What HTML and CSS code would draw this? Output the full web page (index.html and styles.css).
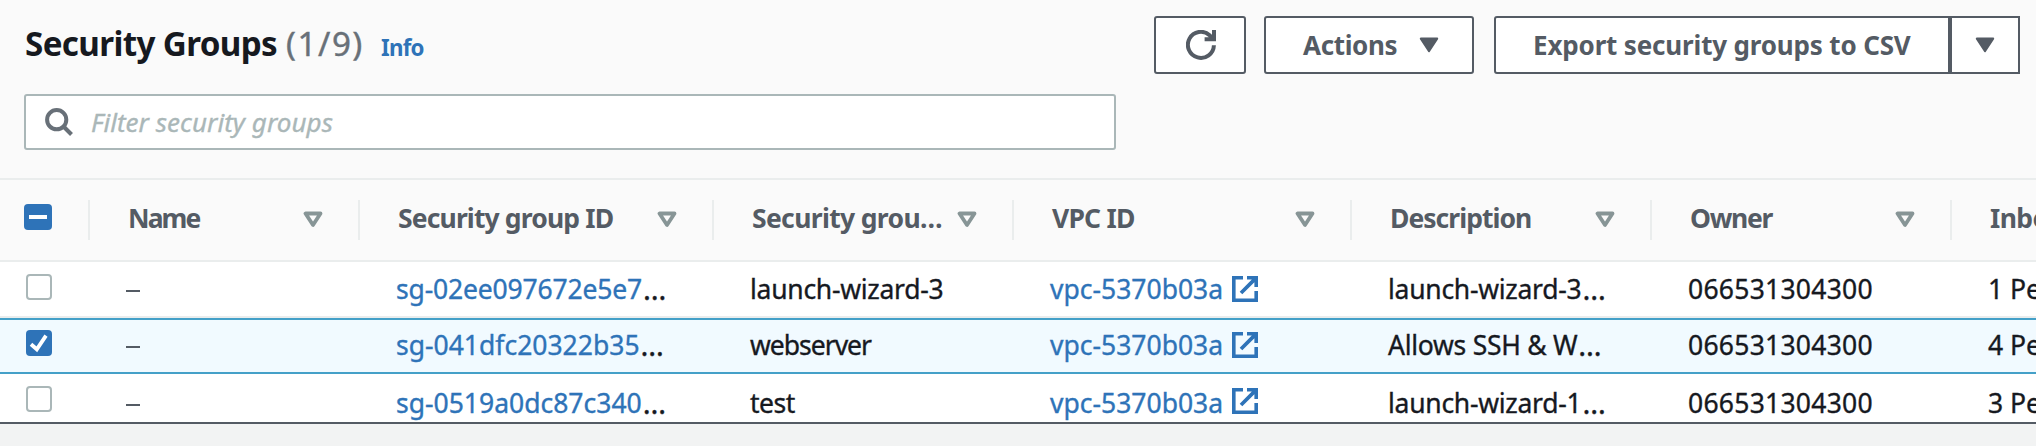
FILE: index.html
```html
<!DOCTYPE html>
<html lang="en">
<head>
<meta charset="utf-8">
<title>Security Groups</title>
<link rel="stylesheet" href="styles.css">
</head>
<body>
<svg width="0" height="0" class="defs" aria-hidden="true">
  <symbol id="sort" viewBox="0 0 20 17"><path d="M2.5 2.5h15L10 14z" fill="none" stroke="#879596" stroke-width="3.8" stroke-linejoin="round"/></symbol>
  <symbol id="caret" viewBox="0 0 20 16"><path d="M1.8 1.6h16.4L10 14.2z" fill="#545b64" stroke="#545b64" stroke-width="2" stroke-linejoin="round"/></symbol>
  <symbol id="ext" viewBox="0 0 26 26"><path d="M11 1.8H1.8v22.4h22.4V15" fill="none" stroke="#2e73b8" stroke-width="3.6"/><path d="M15 0h11v11h-3.6V6.2L10.3 18.3 7.7 15.7 19.8 3.6H15z" fill="#2e73b8"/></symbol>
</svg>
<section class="panel">
  <header class="toolbar">
    <div class="heading">
      <h1 class="title">Security Groups</h1>
      <span class="count">(1/9)</span>
      <a class="info">Info</a>
    </div>
    <div class="actions">
      <button class="btn btn-refresh" aria-label="Refresh">
        <svg class="refresh" viewBox="0 0 30 30"><path d="M27.9 15.2A13 13 0 1 1 23.6 5.2L27 9.2M28 0v9.2H18.6" fill="none" stroke="#545b64" stroke-width="4"/></svg>
      </button>
      <button class="btn btn-actions"><span>Actions</span><svg class="caret"><use href="#caret"/></svg></button>
      <div class="split">
        <button class="btn btn-export"><span>Export security groups to CSV</span></button>
        <button class="btn btn-more" aria-label="More"><svg class="caret"><use href="#caret"/></svg></button>
      </div>
    </div>
  </header>
  <div class="filter">
    <svg class="search" viewBox="0 0 28 28"><circle cx="11.7" cy="11.7" r="9.6" fill="none" stroke="#687078" stroke-width="4"/><path d="m18.5 18.5 8 8" stroke="#687078" stroke-width="4"/></svg>
    <span class="placeholder">Filter security groups</span>
  </div>
  <div class="table">
    <div class="row head">
      <div class="th pick"><span class="box mixed"></span></div>
      <div class="th"><span class="t-name">Name</span><svg class="sort"><use href="#sort"/></svg></div>
      <div class="th"><span class="t-id">Security group ID</span><svg class="sort"><use href="#sort"/></svg></div>
      <div class="th"><span class="t-group">Security grou…</span><svg class="sort"><use href="#sort"/></svg></div>
      <div class="th"><span class="t-vpc">VPC ID</span><svg class="sort"><use href="#sort"/></svg></div>
      <div class="th"><span class="t-desc">Description</span><svg class="sort"><use href="#sort"/></svg></div>
      <div class="th"><span class="t-owner">Owner</span><svg class="sort"><use href="#sort"/></svg></div>
      <div class="th last"><span class="t-inbound">Inbo</span></div>
    </div>
    <div class="row line">
      <div class="td pick"><span class="box"></span></div>
      <div class="td"><span class="dash"></span></div>
      <div class="td"><a class="sg-a">sg-02ee097672e5e7</a><span class="dots">…</span></div>
      <div class="td"><span class="d-wizard">launch-wizard-3</span></div>
      <div class="td"><a>vpc-5370b03a</a><svg class="ext"><use href="#ext"/></svg></div>
      <div class="td"><span class="d-wizard">launch-wizard-3</span><span class="dots">…</span></div>
      <div class="td"><span class="d-num">066531304300</span></div>
      <div class="td"><span>1 Pe</span></div>
    </div>
    <div class="row selected">
      <div class="td pick"><span class="box checked"><svg viewBox="0 0 26 26"><path d="m5 14.3 5.8 5L20 5.6" fill="none" stroke="#fff" stroke-width="3.8"/></svg></span></div>
      <div class="td"><span class="dash"></span></div>
      <div class="td"><a>sg-041dfc20322b35</a><span class="dots">…</span></div>
      <div class="td"><span class="d-web">webserver</span></div>
      <div class="td"><a>vpc-5370b03a</a><svg class="ext"><use href="#ext"/></svg></div>
      <div class="td"><span class="d-wizard">Allows SSH &amp; W</span><span class="dots">…</span></div>
      <div class="td"><span class="d-num">066531304300</span></div>
      <div class="td"><span>4 Pe</span></div>
    </div>
    <div class="row final">
      <div class="td pick"><span class="box"></span></div>
      <div class="td"><span class="dash"></span></div>
      <div class="td"><a>sg-0519a0dc87c340</a><span class="dots">…</span></div>
      <div class="td"><span class="d-test">test</span></div>
      <div class="td"><a>vpc-5370b03a</a><svg class="ext"><use href="#ext"/></svg></div>
      <div class="td"><span class="d-wizard">launch-wizard-1</span><span class="dots">…</span></div>
      <div class="td"><span class="d-num">066531304300</span></div>
      <div class="td"><span>3 Pe</span></div>
    </div>
  </div>
</section>
</body>
</html>
```
FILE: styles.css
```css
* { box-sizing: border-box; }
body {
  margin: 0;
  height: 446px;
  overflow: hidden;
  background: #f2f3f3;
  color: #16191f;
  font: 26.5px/36px "Noto Sans", "Open Sans", sans-serif;
}
.defs { display: block; }
.panel {
  height: 424px;
  background: #fafafa;
  border-bottom: 2px solid #545b64;
  overflow: hidden;
}
.toolbar {
  display: flex;
  justify-content: space-between;
  height: 94px;
  padding: 16px 16px 0 25px;
}
.heading {
  display: flex;
  align-items: baseline;
  height: 58px;
  line-height: 56px;
  white-space: nowrap;
}
.title {
  margin: 0 9px 0 0;
  font-size: 33.2px;
  letter-spacing: -0.64px;
}
.count {
  width: 95px;
  color: #687078;
  font-size: 33.2px;
  letter-spacing: 1.5px;
  -webkit-text-stroke: 0.4px;
}
.info {
  color: #2e73b8;
  font-size: 22.3px;
  font-weight: 700;
  letter-spacing: -0.8px;
}
.actions { display: flex; }
.btn {
  display: flex;
  align-items: center;
  height: 58px;
  margin: 0;
  padding: 0;
  background: #fff;
  border: 2px solid #545b64;
  border-radius: 3px;
  color: #545b64;
  font: 700 26px/50px "Noto Sans", "Open Sans", sans-serif;
  white-space: nowrap;
}
.btn span { padding-bottom: 1px; }
.btn-refresh { width: 92px; margin-right: 18px; padding-left: 30px; }
.refresh { width: 30px; height: 30px; }
.btn-actions {
  width: 210px;
  margin-right: 20px;
  padding: 0 33px 0 37px;
  justify-content: space-between;
  letter-spacing: -0.34px;
}
.caret { display: block; width: 20px; height: 16px; }
.split { display: flex; }
.btn-export {
  width: 456px;
  padding-left: 37px;
  border-radius: 3px 0 0 3px;
  letter-spacing: -0.16px;
}
.btn-more { width: 70px; padding-left: 23px; border-radius: 0; }
.filter {
  display: flex;
  align-items: flex-start;
  width: 1092px;
  height: 56px;
  margin-left: 24px;
  padding: 12px 0 0 19px;
  background: #fff;
  border: 2px solid #aab7b8;
  border-radius: 3px;
}
.search { width: 28px; height: 28px; }
.placeholder {
  margin-left: 18px;
  color: #aab7b8;
  font-size: 26px;
  font-style: italic;
  line-height: 28px;
  letter-spacing: 0.04px;
  -webkit-text-stroke: 0.35px;
}
.table { margin-top: 28px; }
.row {
  display: grid;
  grid-template-columns: 90px 270px 354px 300px 338px 300px 300px 84px;
  background: #fff;
}
.head {
  height: 84px;
  background: #fafafa;
  border-top: 2px solid #eaeded;
  border-bottom: 2px solid #eaeded;
}
.th {
  display: flex;
  align-items: flex-start;
  justify-content: space-between;
  height: 40px;
  margin-top: 20px;
  padding: 0 35px 0 38px;
  border-right: 2px solid #eaeded;
  color: #545b64;
  font-weight: 700;
  white-space: nowrap;
}
.th.last { border: 0; padding-right: 0; overflow: hidden; }
.sort { flex: none; width: 20px; height: 17px; margin-top: 10.5px; }
.th.pick { padding: 0 0 0 24px; justify-content: flex-start; }
.td {
  display: flex;
  align-items: flex-start;
  padding-left: 36px;
  line-height: 38px;
  white-space: nowrap;
  overflow: hidden;
  -webkit-text-stroke: 0.35px;
}
.td.pick { padding-left: 26px; }
.line { height: 56px; padding-top: 8px; border-bottom: 2px solid #eaeded; }
.selected {
  height: 56px;
  padding-top: 6px;
  background: #f1faff;
  border-top: 2px solid #44a0c8;
  border-bottom: 2px solid #44a0c8;
}
.final { height: 48px; padding-top: 10px; }
a { color: #2e73b8; }
.box {
  flex: none;
  width: 26px;
  height: 26px;
  margin-top: 4px;
  background: #fff;
  border: 2px solid #aab7b8;
  border-radius: 4px;
}
.box.checked { border: 0; background: #2e73b8; }
.box.checked svg { display: block; }
.box.mixed {
  display: flex;
  align-items: center;
  justify-content: center;
  width: 28px;
  border: 0;
  background: #2e73b8;
}
.box.mixed::after { content: ""; width: 18px; height: 4px; background: #fff; }
.dash { width: 14px; height: 2.5px; margin-top: 19.5px; background: #545b64; }
.ext { flex: none; width: 26px; height: 26px; margin: 6px 0 0 9px; }
.final .box { margin-top: 2px; }
.final .ext { margin-top: 4px; }
.dots { margin-left: 1px; font-size: 29.5px; }
.t-name { letter-spacing: -1.9px; }
.t-id { letter-spacing: -0.86px; }
.t-group { letter-spacing: -0.65px; }
.t-vpc { letter-spacing: -0.8px; }
.t-desc { letter-spacing: -0.97px; }
.t-owner { letter-spacing: -1.32px; }
.t-inbound { letter-spacing: -0.6px; }
.sg-a { letter-spacing: -0.17px; }
.d-wizard { letter-spacing: -0.27px; }
.d-web { letter-spacing: -1px; }
.d-test { letter-spacing: -0.5px; }
.d-num { letter-spacing: 0.25px; }
```
